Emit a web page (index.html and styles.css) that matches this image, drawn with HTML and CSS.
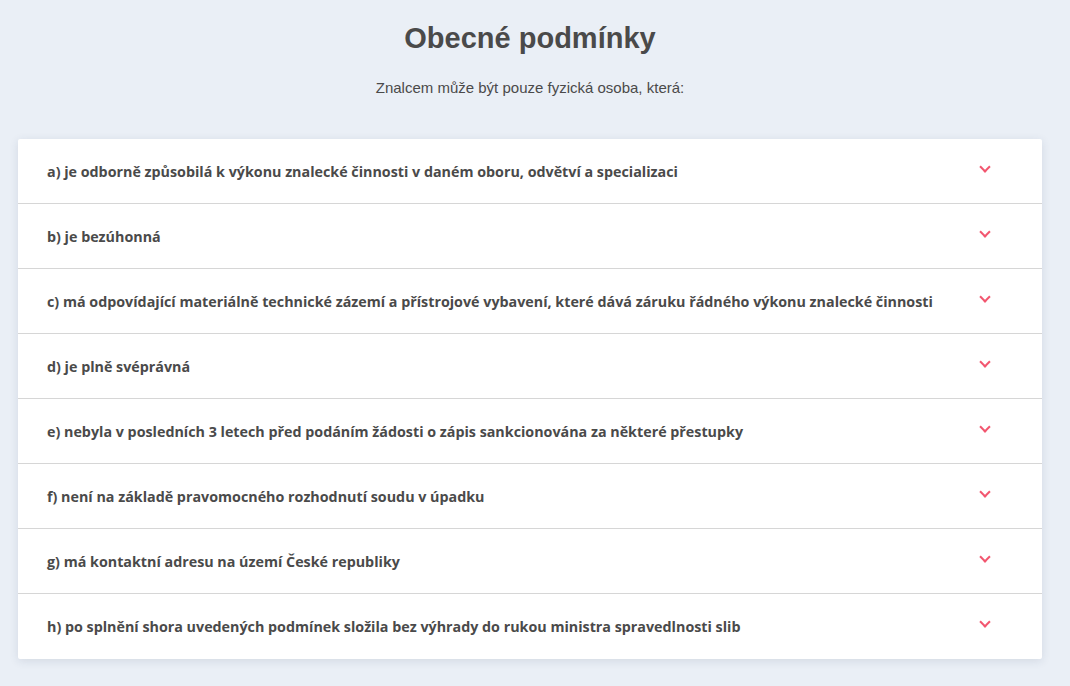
FILE: index.html
```html
<!DOCTYPE html>
<html lang="cs">
<head>
    <meta charset="UTF-8">
    <meta name="viewport" content="width=device-width, initial-scale=1.0">
    <title>Obecné podmínky</title>
    <link rel="stylesheet" href="styles.css">
</head>
<body>
    <section class="conditions">
        <h1>Obecné podmínky</h1>
        <p class="lead">Znalcem může být pouze fyzická osoba, která:</p>

        <div class="accordion">
            <div class="acc-item">a) je odborně způsobilá k výkonu znalecké činnosti v daném oboru, odvětví a specializaci</div>
            <div class="acc-item">b) je bezúhonná</div>
            <div class="acc-item">c) má odpovídající materiálně technické zázemí a přístrojové vybavení, které dává záruku řádného výkonu znalecké činnosti</div>
            <div class="acc-item">d) je plně svéprávná</div>
            <div class="acc-item">e) nebyla v posledních 3 letech před podáním žádosti o zápis sankcionována za některé přestupky</div>
            <div class="acc-item">f) není na základě pravomocného rozhodnutí soudu v úpadku</div>
            <div class="acc-item">g) má kontaktní adresu na území České republiky</div>
            <div class="acc-item">h) po splnění shora uvedených podmínek složila bez výhrady do rukou ministra spravedlnosti slib</div>
        </div>
    </section>
</body>
</html>
```

FILE: styles.css
```css
:root {
    --text: #4a4a4a;
    --accent: #f2566f;
    --background: #eaeff6;
}

* {
    margin: 0;
    padding: 0;
    box-sizing: border-box;
}

body {
    background: var(--background);
    font-family: 'Liberation Sans', Arial, sans-serif;
    color: var(--text);
}

.conditions {
    padding: 20px 28px 28px 18px;
}

h1 {
    text-align: center;
    font-size: 29px;
    font-weight: 700;
    line-height: 36px;
    color: var(--text);
}

.lead {
    text-align: center;
    font-size: 15px;
    line-height: 20px;
    margin-top: 22px;
}

.accordion {
    margin-top: 41px;
    background: #fff;
    border-radius: 2px;
    box-shadow: 0 2px 10px rgba(40, 60, 90, 0.12);
}

.acc-item {
    display: flex;
    align-items: center;
    height: 65px;
    padding: 0 70px 0 29px;
    font-family: 'Open Sans', sans-serif;
    font-weight: 700;
    font-size: 14.3px;
    border-bottom: 1px solid #d6d6d6;
    position: relative;
}

.acc-item:last-child {
    border-bottom: none;
}

.acc-item::after {
    content: '';
    position: absolute;
    right: 53px;
    top: 24px;
    width: 6px;
    height: 6px;
    border-right: 2px solid var(--accent);
    border-bottom: 2px solid var(--accent);
    transform: rotate(45deg);
}
```
